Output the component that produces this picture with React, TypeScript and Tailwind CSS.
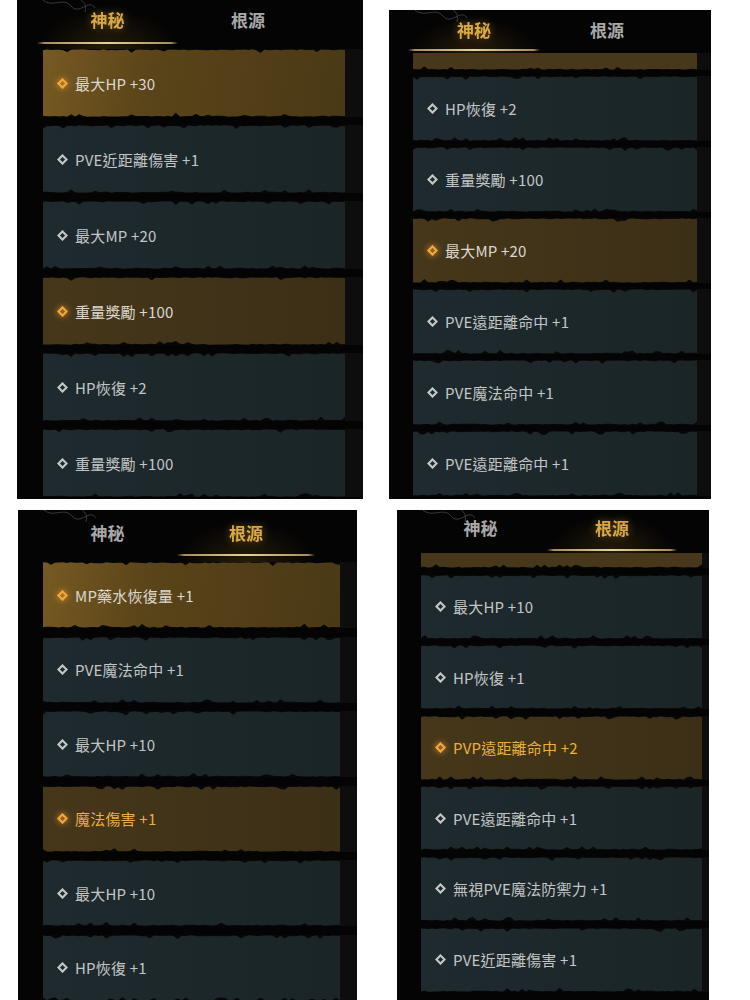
import React from "react";
import clsx from "clsx";

type Row = { text: string; gold?: boolean; selected?: boolean; goldText?: boolean };

type PanelCfg = {
  outer: string;
  header: string;
  tabs: [string, string];
  underlineGap: string;
  active: 0 | 1;
  partial?: string;
  rowBox: string;
  rowH: string;
  gap: string;
  rows: Row[];
  seed: number;
};

function rng(seed: number) {
  let s = seed;
  return () => {
    s = (s * 9301 + 49297) % 233280;
    return s / 233280;
  };
}

// torn paper edge, drawn as a dark band with random bite depth
function edgePath(seed: number) {
  const r = rng(seed);
  let d = "M0 0";
  for (let x = 0; x <= 300; x += 4) {
    const bite = r() > 0.88 ? 1.5 + r() * 1.5 : 0;
    const depth = 0.3 + r() * 1.0 + bite;
    d += ` L${x} ${depth.toFixed(2)}`;
  }
  return d + " L300 0 Z";
}

function Edge({ seed, bottom }: { seed: number; bottom?: boolean }) {
  return (
    <svg
      className={clsx("absolute left-0 w-full h-[5px] pointer-events-none", bottom ? "bottom-0 rotate-180" : "top-0")}
      viewBox="0 0 300 5"
      preserveAspectRatio="none"
    >
      <path d={edgePath(seed)} fill="#070707" />
    </svg>
  );
}

function Diamond({ gold }: { gold?: boolean }) {
  return (
    <svg
      width="11"
      height="11"
      viewBox="0 0 11 11"
      className={clsx("shrink-0", gold && "drop-shadow-[0_0_3px_#ff9f2e]")}
    >
      <path d="M5.5 1.4 L9.6 5.5 L5.5 9.6 L1.4 5.5 Z" fill="none" stroke={gold ? "#f2a93b" : "#c3c7c7"} strokeWidth="2.1" />
    </svg>
  );
}

function Ornament() {
  return (
    <svg className="absolute left-[22px] top-[-6px] opacity-40" width="70" height="22" viewBox="0 0 70 22">
      <path d="M2 4 C12 16 24 2 32 12 S50 4 56 14" stroke="#8a8a80" strokeWidth="1" fill="none" />
      <path d="M40 2 C44 10 48 8 46 18" stroke="#8a8a80" strokeWidth="1" fill="none" />
    </svg>
  );
}

function StatRow({ row, cfg, i }: { row: Row; cfg: PanelCfg; i: number }) {
  const bg = row.selected
    ? "bg-[linear-gradient(100deg,#775a22_0%,#5a4419_35%,#4a3916_100%)]"
    : row.gold
    ? "bg-[linear-gradient(90deg,#46371a_0%,#3c2f17_100%)]"
    : "bg-[linear-gradient(90deg,#1e2a2e_0%,#1b2528_100%)]";
  return (
    <div className="flex shrink-0">
      <div className={clsx("relative flex items-center gap-[7px] pl-[14px] shrink-0", cfg.rowBox, cfg.rowH, bg)}>
        <Edge seed={cfg.seed + i * 7} />
        <Edge seed={cfg.seed + i * 7 + 3} bottom />
        <Diamond gold={row.gold} />
        <span
          className={clsx(
            "text-[15px] leading-none tracking-[0.2px]",
            row.goldText ? "text-[#eab043]" : row.gold ? "text-[#dcd8d0]" : "text-[#c3c6c6]"
          )}
        >
          {row.text}
        </span>
      </div>
      <div className={clsx("flex-1 bg-[#0d0d0d]", cfg.rowH)} />
    </div>
  );
}

function Panel({ cfg }: { cfg: PanelCfg }) {
  const names = ["神秘", "根源"];
  return (
    <div className={clsx("relative bg-[#040404] overflow-hidden flex flex-col shrink-0", cfg.outer)}>
      <Ornament />
      <div className={clsx("flex shrink-0", cfg.header)}>
        {names.map((n, idx) => {
          const on = idx === cfg.active;
          return (
            <div
              key={n}
              className={clsx(
                "flex flex-col items-center",
                cfg.tabs[idx],
                on && "bg-[radial-gradient(ellipse_at_bottom,rgba(170,120,40,0.2),transparent_70%)]"
              )}
            >
              <span
                className={clsx(
                  "text-[17px] leading-[24px] font-bold",
                  on ? "text-[#d9a946] drop-shadow-[0_0_4px_rgba(220,160,60,0.45)]" : "text-[#a9a9a9]"
                )}
              >
                {n}
              </span>
              {on && (
                <div
                  className={clsx(
                    "w-full h-[2px] bg-[linear-gradient(90deg,transparent,#a88c55_5%,#e6d29c_50%,#a88c55_95%,transparent)]",
                    cfg.underlineGap
                  )}
                />
              )}
            </div>
          );
        })}
      </div>
      <div className={clsx("flex flex-col", cfg.gap)}>
        {cfg.partial && (
          <div className="flex shrink-0">
            <div className={clsx("relative shrink-0 bg-[#47381b]", cfg.rowBox, cfg.partial)}>
              <Edge seed={cfg.seed + 99} bottom />
            </div>
            <div className={clsx("flex-1 bg-[#0d0d0d]", cfg.partial)} />
          </div>
        )}
        {cfg.rows.map((r, i) => (
          <StatRow key={i} row={r} cfg={cfg} i={i} />
        ))}
      </div>
    </div>
  );
}

const panels: PanelCfg[] = [
  {
    outer: "w-[346px] h-[499px] ml-[17px]",
    header: "h-[49px] pl-[20px] pt-[8px]",
    tabs: ["w-[141px]", "w-[140px]"],
    underlineGap: "mt-[10px]",
    active: 0,
    rowBox: "ml-[26px] w-[302px]",
    rowH: "h-[68px]",
    gap: "gap-[8px]",
    seed: 11,
    rows: [
      { text: "最大HP +30", gold: true, selected: true },
      { text: "PVE近距離傷害 +1" },
      { text: "最大MP +20" },
      { text: "重量獎勵 +100", gold: true },
      { text: "HP恢復 +2" },
      { text: "重量獎勵 +100" },
    ],
  },
  {
    outer: "w-[322px] h-[489px] ml-[26px] mt-[10px]",
    header: "h-[43px] pl-[19px] pt-[8px]",
    tabs: ["w-[132px]", "w-[134px]"],
    underlineGap: "mt-[7px]",
    active: 0,
    partial: "h-[17px]",
    rowBox: "ml-[24px] w-[284px]",
    rowH: "h-[65px]",
    gap: "gap-[6px]",
    seed: 37,
    rows: [
      { text: "HP恢復 +2" },
      { text: "重量獎勵 +100" },
      { text: "最大MP +20", gold: true },
      { text: "PVE遠距離命中 +1" },
      { text: "PVE魔法命中 +1" },
      { text: "PVE遠距離命中 +1" },
    ],
  },
  {
    outer: "w-[339px] h-[490px] ml-[18px]",
    header: "h-[52px] pl-[20px] pt-[11px]",
    tabs: ["w-[139px]", "w-[138px]"],
    underlineGap: "mt-[9px]",
    active: 1,
    rowBox: "ml-[25px] w-[297px]",
    rowH: "h-[66px]",
    gap: "gap-[8.5px]",
    seed: 53,
    rows: [
      { text: "MP藥水恢復量 +1", gold: true, selected: true },
      { text: "PVE魔法命中 +1" },
      { text: "最大HP +10" },
      { text: "魔法傷害 +1", gold: true, goldText: true },
      { text: "最大HP +10" },
      { text: "HP恢復 +1" },
    ],
  },
  {
    outer: "w-[312px] h-[490px] ml-[40px]",
    header: "h-[43px] pl-[17px] pt-[6px]",
    tabs: ["w-[133px]", "w-[130px]"],
    underlineGap: "mt-[9px]",
    active: 1,
    partial: "h-[15px]",
    rowBox: "ml-[24px] w-[281px]",
    rowH: "h-[64px]",
    gap: "gap-[6.6px]",
    seed: 71,
    rows: [
      { text: "最大HP +10" },
      { text: "HP恢復 +1" },
      { text: "PVP遠距離命中 +2", gold: true, goldText: true },
      { text: "PVE遠距離命中 +1" },
      { text: "無視PVE魔法防禦力 +1" },
      { text: "PVE近距離傷害 +1" },
    ],
  },
];

export default function App() {
  return (
    <div className="w-[750px] h-[1000px] bg-white overflow-hidden font-['Noto_Sans_CJK_TC','Noto_Sans',sans-serif]">
      <div className="flex items-start h-[499px]">
        <Panel cfg={panels[0]} />
        <Panel cfg={panels[1]} />
      </div>
      <div className="flex items-start mt-[11px]">
        <Panel cfg={panels[2]} />
        <Panel cfg={panels[3]} />
      </div>
    </div>
  );
}
